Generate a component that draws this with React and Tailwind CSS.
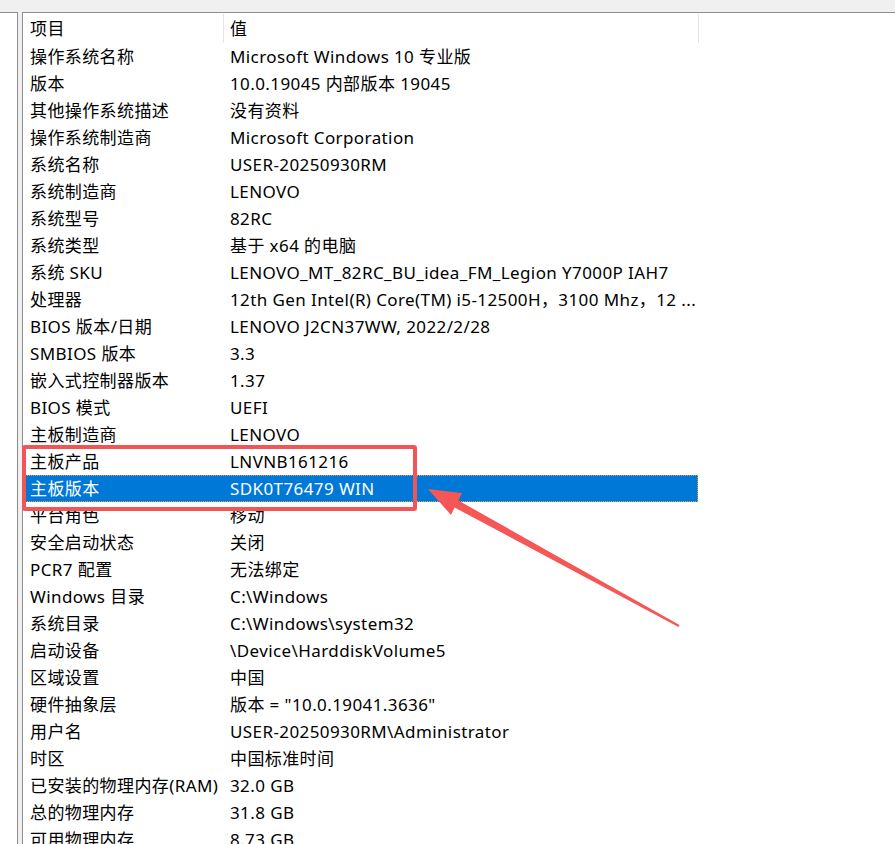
import React from "react";

const rows = [
  ["操作系统名称", "Microsoft Windows 10 专业版"],
  ["版本", "10.0.19045 内部版本 19045"],
  ["其他操作系统描述", "没有资料"],
  ["操作系统制造商", "Microsoft Corporation"],
  ["系统名称", "USER-20250930RM"],
  ["系统制造商", "LENOVO"],
  ["系统型号", "82RC"],
  ["系统类型", "基于 x64 的电脑"],
  ["系统 SKU", "LENOVO_MT_82RC_BU_idea_FM_Legion Y7000P IAH7"],
  ["处理器", "12th Gen Intel(R) Core(TM) i5-12500H，3100 Mhz，12 ..."],
  ["BIOS 版本/日期", "LENOVO J2CN37WW, 2022/2/28"],
  ["SMBIOS 版本", "3.3"],
  ["嵌入式控制器版本", "1.37"],
  ["BIOS 模式", "UEFI"],
  ["主板制造商", "LENOVO"],
  ["主板产品", "LNVNB161216"],
  ["主板版本", "SDK0T76479 WIN"],
  ["平台角色", "移动"],
  ["安全启动状态", "关闭"],
  ["PCR7 配置", "无法绑定"],
  ["Windows 目录", "C:\\Windows"],
  ["系统目录", "C:\\Windows\\system32"],
  ["启动设备", "\\Device\\HarddiskVolume5"],
  ["区域设置", "中国"],
  ["硬件抽象层", "版本 = \"10.0.19041.3636\""],
  ["用户名", "USER-20250930RM\\Administrator"],
  ["时区", "中国标准时间"],
  ["已安装的物理内存(RAM)", "32.0 GB"],
  ["总的物理内存", "31.8 GB"],
  ["可用物理内存", "8.73 GB"],
];

export default function App() {
  return (
    <div
      className="relative w-[895px] h-[844px] overflow-hidden bg-[#f0f0f0] text-[17px] tracking-[0.4px] text-black"
      style={{ fontFamily: '"Noto Sans", "Noto Sans CJK SC", sans-serif' }}
    >
      <div className="h-[12px]" />
      <div className="flex h-[832px]">
        <div className="w-[18px] bg-white border-t border-r border-[#8c8c8c]" />
        <div className="w-[4px]" />
        <div className="flex-1 bg-white border-t border-l border-[#8c8c8c]">
          <div className="flex h-[30px] items-center leading-none">
            <div className="w-[200px] pl-[7px] h-full flex items-center">项目</div>
            <div className="w-px h-[29px] bg-[#e5e5e5]" />
            <div className="w-[474px] pl-[6px] h-full flex items-center">值</div>
            <div className="w-px h-[29px] bg-[#e5e5e5]" />
          </div>
          {rows.map(([k, v], i) => {
            const sel = i === 16;
            return (
              <div
                key={i}
                className={
                  "flex w-[675px] h-[27px] items-center leading-none whitespace-nowrap " +
                  (sel
                    ? "bg-[#0078d7] text-white border border-dotted border-[#e8a040]"
                    : "border border-transparent")
                }
              >
                <div className="w-[200px] pl-[6px]">{k}</div>
                <div className="pl-[6px]">{v}</div>
              </div>
            );
          })}
        </div>
      </div>

      {/* annotation box */}
      <div className="absolute left-[22px] top-[445px] w-[395px] h-[66px] border-[4px] border-[#f25555] rounded-[3px]" />

      {/* annotation arrow */}
      <svg className="absolute left-0 top-0" width="895" height="844" viewBox="0 0 895 844">
        <polygon
          points="428,489 462,493 458.4,500.5 679.5,625 678.5,627 454.6,507.5 451,515"
          fill="#f55656"
        />
      </svg>
    </div>
  );
}
